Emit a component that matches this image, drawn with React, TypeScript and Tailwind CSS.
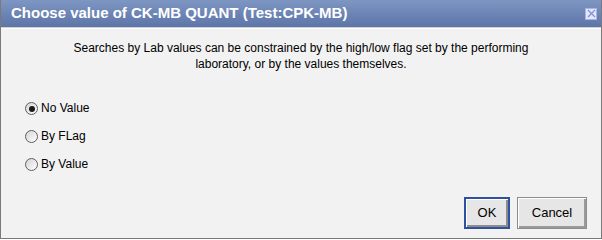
import { useState } from "react";

type Mode = "none" | "flag" | "value";

const options: { id: Mode; label: string }[] = [
  { id: "none", label: "No Value" },
  { id: "flag", label: "By FLag" },
  { id: "value", label: "By Value" },
];

const Radio = ({ checked }: { checked: boolean }) => (
  <span className="flex h-[13px] w-[13px] items-center justify-center rounded-full border border-[#5e5e5e] bg-gradient-to-br from-[#d4d4d4] to-white">
    {checked && <span className="h-[6px] w-[6px] rounded-full bg-[#1a1a1a]" />}
  </span>
);

export default function App() {
  const [mode, setMode] = useState<Mode>("none");

  return (
    <div className="flex h-[239px] w-[602px] flex-col border-x border-b border-[#7a7a7a] bg-[#f2f2f2] font-['Liberation_Sans',Arial,sans-serif] text-[12px] text-black">
      {/* title bar */}
      <div className="flex h-[27px] shrink-0 items-center justify-between bg-gradient-to-b from-[#7d96c2] to-[#5d75a8] pl-[10px] pr-[4px]">
        <span className="text-[15px] font-bold text-white">Choose value of CK-MB QUANT (Test:CPK-MB)</span>
        <button className="flex h-[12px] w-[12px] items-center justify-center border border-[#a8b2e6] bg-[#e2e7fb]">
          <svg width="9" height="9" viewBox="0 0 9 9">
            <path d="M1 1L8 8M8 1L1 8" stroke="#7f8fd6" strokeWidth="1.2" />
          </svg>
        </button>
      </div>
      <div className="h-[2px] shrink-0 border-t border-[#d0d0d0] bg-white" />

      <div className="flex flex-1 flex-col px-[24px]">
        <p className="mt-[11px] text-center text-[12px] leading-[16px]">
          Searches by Lab values can be constrained by the high/low flag set by the performing
          <br />
          laboratory, or by the values themselves.
        </p>

        <div className="mt-[29px] flex flex-col gap-[13px]">
          {options.map((o) => (
            <label key={o.id} className="flex cursor-default items-center gap-[3px]" onClick={() => setMode(o.id)}>
              <Radio checked={mode === o.id} />
              <span className="leading-[15px]">{o.label}</span>
            </label>
          ))}
        </div>

        <div className="mt-auto mb-[9px] flex justify-end gap-[7px]">
          <button className="h-[32px] w-[46px] border-2 border-[#2f4f9f] bg-[#e6e6e6] text-[13px] shadow-[inset_1px_1px_0_#ffffff,inset_-2px_-2px_0_#8c8c8c]">
            OK
          </button>
          <button className="-mr-[10px] h-[32px] w-[70px] border border-[#8c8c8c] bg-[#e6e6e6] text-[13px] shadow-[inset_1px_1px_0_#ffffff,inset_-2px_-2px_0_#9a9a9a]">
            Cancel
          </button>
        </div>
      </div>
    </div>
  );
}
